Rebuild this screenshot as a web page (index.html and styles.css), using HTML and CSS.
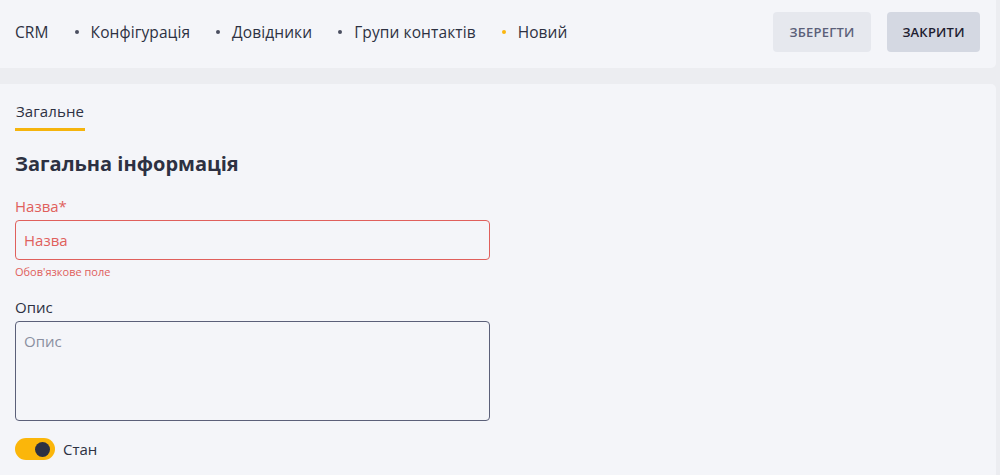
FILE: index.html
```html
<!DOCTYPE html>
<html lang="uk">
<head>
    <meta charset="UTF-8">
    <title>Новий</title>
    <link rel="stylesheet" href="styles.css">
</head>
<body>

<header class="topbar">
    <nav class="crumbs">
        <span class="crumb">CRM</span>
        <span class="dot"></span>
        <span class="crumb">Конфігурація</span>
        <span class="dot"></span>
        <span class="crumb">Довідники</span>
        <span class="dot"></span>
        <span class="crumb">Групи контактів</span>
        <span class="dot dot-active"></span>
        <span class="crumb">Новий</span>
    </nav>
    <div class="actions">
        <button class="btn btn-save">Зберегти</button>
        <button class="btn btn-close">Закрити</button>
    </div>
</header>

<main class="panel">
    <div class="tabs">
        <span class="tab tab-active">Загальне</span>
    </div>

    <h2 class="section-title">Загальна інформація</h2>

    <div class="field field-error">
        <label class="field-label" for="name">Назва*</label>
        <input class="field-input" id="name" type="text" placeholder="Назва">
        <p class="field-hint">Обов'язкове поле</p>
    </div>

    <div class="field field-last">
        <label class="field-label" for="desc">Опис</label>
        <textarea class="field-input field-area" id="desc" placeholder="Опис"></textarea>
    </div>

    <label class="switch">
        <span class="switch-track"><span class="switch-knob"></span></span>
        <span class="switch-text">Стан</span>
    </label>
</main>

</body>
</html>
```

FILE: styles.css
```css
/* Global */
body {
    margin: 0;
    background: #ecedf1;
    font-family: 'Open Sans', 'Noto Sans', sans-serif;
    color: #2d3142;
    padding-right: 4px;
    overflow: hidden;
}

/* Top bar */
.topbar {
    height: 68px;
    background: #f4f5f9;
    border-radius: 0 0 5px 0;
    display: flex;
    align-items: flex-start;
    justify-content: space-between;
    padding: 12px 16px 0 15px;
    box-sizing: border-box;
}

.crumbs {
    display: flex;
    align-items: center;
    height: 40px;
    font-size: 15.5px;
    letter-spacing: 0.1px;
    color: #2d3142;
}

.dot {
    width: 4px;
    height: 4px;
    border-radius: 50%;
    background: #4a4e60;
    margin: 0 12px 0 26px;
}

.dot-active {
    background: #fbb60f;
}

.actions {
    display: flex;
    gap: 16px;
}

.btn {
    height: 40px;
    border: none;
    border-radius: 4px;
    padding: 0 12px;
    font-family: inherit;
    font-size: 13px;
    font-weight: 600;
    letter-spacing: 0.2px;
    text-transform: uppercase;
    cursor: pointer;
}

.btn-save {
    background: #e6e8ee;
    color: #5b6079;
    width: 98px;
}

.btn-close {
    background: #d4d8e2;
    color: #1e2030;
    width: 93px;
}

/* Content panel */
.panel {
    margin-top: 16px;
    background: #f4f5f9;
    border-radius: 0 5px 0 0;
    padding: 17px 15px 14px;
    min-height: calc(100vh - 84px);
    box-sizing: border-box;
}

.tabs {
    display: flex;
}

.tab {
    font-size: 15px;
    letter-spacing: 0.1px;
    padding: 0 1px 7px 1px;
    color: #2d3142;
}

.tab-active {
    border-bottom: 3px solid #f5b40d;
}

.section-title {
    font-size: 20px;
    font-weight: 700;
    margin: 19px 0 19px;
    color: #2d3142;
}

/* Fields */
.field {
    width: 475px;
    margin-bottom: 18px;
}

.field-last {
    margin-bottom: 17px;
}

.field-label {
    display: block;
    font-size: 15px;
    margin-bottom: 4px;
}

.field-input {
    display: block;
    width: 100%;
    height: 40px;
    box-sizing: border-box;
    border: 1px solid #5b6079;
    border-radius: 4px;
    background: transparent;
    padding: 0 8px;
    font-family: inherit;
    font-size: 15px;
    outline: none;
}

.field-input::placeholder {
    color: #8a8fa0;
}

.field-area {
    height: 100px;
    padding: 9px 8px;
    resize: none;
}

.field-error .field-label,
.field-error .field-hint {
    color: #e0605c;
}

.field-error .field-input {
    border-color: #e0605c;
}

.field-error .field-input::placeholder {
    color: #e0605c;
}

.field-hint {
    font-size: 11px;
    margin: 4px 0 0;
}

/* Switch */
.switch {
    display: flex;
    align-items: center;
    gap: 8px;
}

.switch-track {
    width: 40px;
    height: 22px;
    border-radius: 11px;
    background: #fbb60a;
    display: flex;
    align-items: center;
    justify-content: flex-end;
    padding: 0 5px;
    box-sizing: border-box;
}

.switch-knob {
    width: 15px;
    height: 15px;
    border-radius: 50%;
    background: #2d3142;
}

.switch-text {
    font-size: 15px;
}
```
